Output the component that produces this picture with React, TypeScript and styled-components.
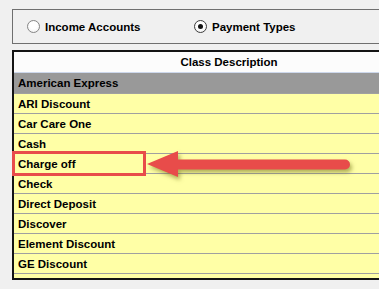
import styled, { createGlobalStyle } from 'styled-components';

const GlobalStyle = createGlobalStyle`
  html, body {
    margin: 0;
    padding: 0;
    background: #f0f0f0;
    overflow: hidden;
  }
  body {
    font-family: "Liberation Sans", Arial, sans-serif;
  }
`;

const Page = styled.div`
  position: relative;
  width: 379px;
  height: 289px;
  overflow: hidden;
  padding: 9px 0 0 12px;
  box-sizing: border-box;
`;

const GroupBox = styled.div`
  width: 460px;
  height: 35px;
  box-sizing: border-box;
  border: 1px solid #6f6f6f;
  display: flex;
  align-items: center;
  padding-left: 14px;
`;

const Option = styled.label<{ $width?: number }>`
  display: flex;
  align-items: center;
  gap: 5px;
  width: ${p => (p.$width ? `${p.$width}px` : 'auto')};
  font-size: 11.5px;
  font-weight: bold;
  color: #000;
`;

const Radio = styled.span<{ $checked: boolean }>`
  width: 13px;
  height: 13px;
  box-sizing: border-box;
  border-radius: 50%;
  border: 1px solid ${p => (p.$checked ? '#3c3c3c' : '#858585')};
  background: radial-gradient(circle at 50% 40%, #ffffff 40%, #ececec 100%);
  display: flex;
  align-items: center;
  justify-content: center;

  &::after {
    content: '';
    display: ${p => (p.$checked ? 'block' : 'none')};
    width: 5px;
    height: 5px;
    border-radius: 50%;
    background: #111;
  }
`;

const Grid = styled.div`
  margin-top: 6px;
  width: 434px;
  height: 230px;
  box-sizing: border-box;
  border: 2px solid #141414;
  overflow: hidden;
  background: #ffffa6;
`;

const Header = styled.div`
  height: 21px;
  box-sizing: border-box;
  background: #fcfcfc;
  border-bottom: 1px solid #cdd8ec;
  display: flex;
  align-items: center;
  justify-content: center;
  font-size: 11.5px;
  font-weight: bold;
  color: #000;
`;

const Row = styled.div<{ $selected?: boolean }>`
  height: ${p => (p.$selected ? 21 : 20)}px;
  box-sizing: border-box;
  border-bottom: 1px solid #a0a0a0;
  background: ${p => (p.$selected ? '#999999' : '#ffffa6')};
  display: flex;
  align-items: center;
  padding-left: 4px;
  font-size: 11.5px;
  font-weight: bold;
  color: #000;
  white-space: nowrap;
`;

const Highlight = styled.div`
  position: absolute;
  left: 12px;
  top: 151px;
  width: 134px;
  height: 25px;
  box-sizing: border-box;
  border: 3px solid #e84c4a;
`;

const Arrow = styled.svg`
  position: absolute;
  left: 0;
  top: 0;
  pointer-events: none;
  filter: drop-shadow(2px 3px 2px rgba(110, 110, 20, 0.55));
`;

const rows = [
  'ARI Discount',
  'Car Care One',
  'Cash',
  'Charge off',
  'Check',
  'Direct Deposit',
  'Discover',
  'Element Discount',
  'GE Discount',
  '',
];

export default function App() {
  return (
    <Page>
      <GlobalStyle />
      <GroupBox>
        <Option $width={167}>
          <Radio $checked={false} />
          Income Accounts
        </Option>
        <Option>
          <Radio $checked />
          Payment Types
        </Option>
      </GroupBox>

      <Grid>
        <Header>Class Description</Header>
        <Row $selected>American Express</Row>
        {rows.map((r, i) => (
          <Row key={i}>{r}</Row>
        ))}
      </Grid>

      <Highlight />
      <Arrow width="379" height="289" viewBox="0 0 379 289">
        <path
          d="M147 164 L178 151 L178 159.5 L345 159.5 A5 5 0 0 1 345 169.5 L178 169.5 L178 177 Z"
          fill="#e84c4a"
        />
      </Arrow>
    </Page>
  );
}
